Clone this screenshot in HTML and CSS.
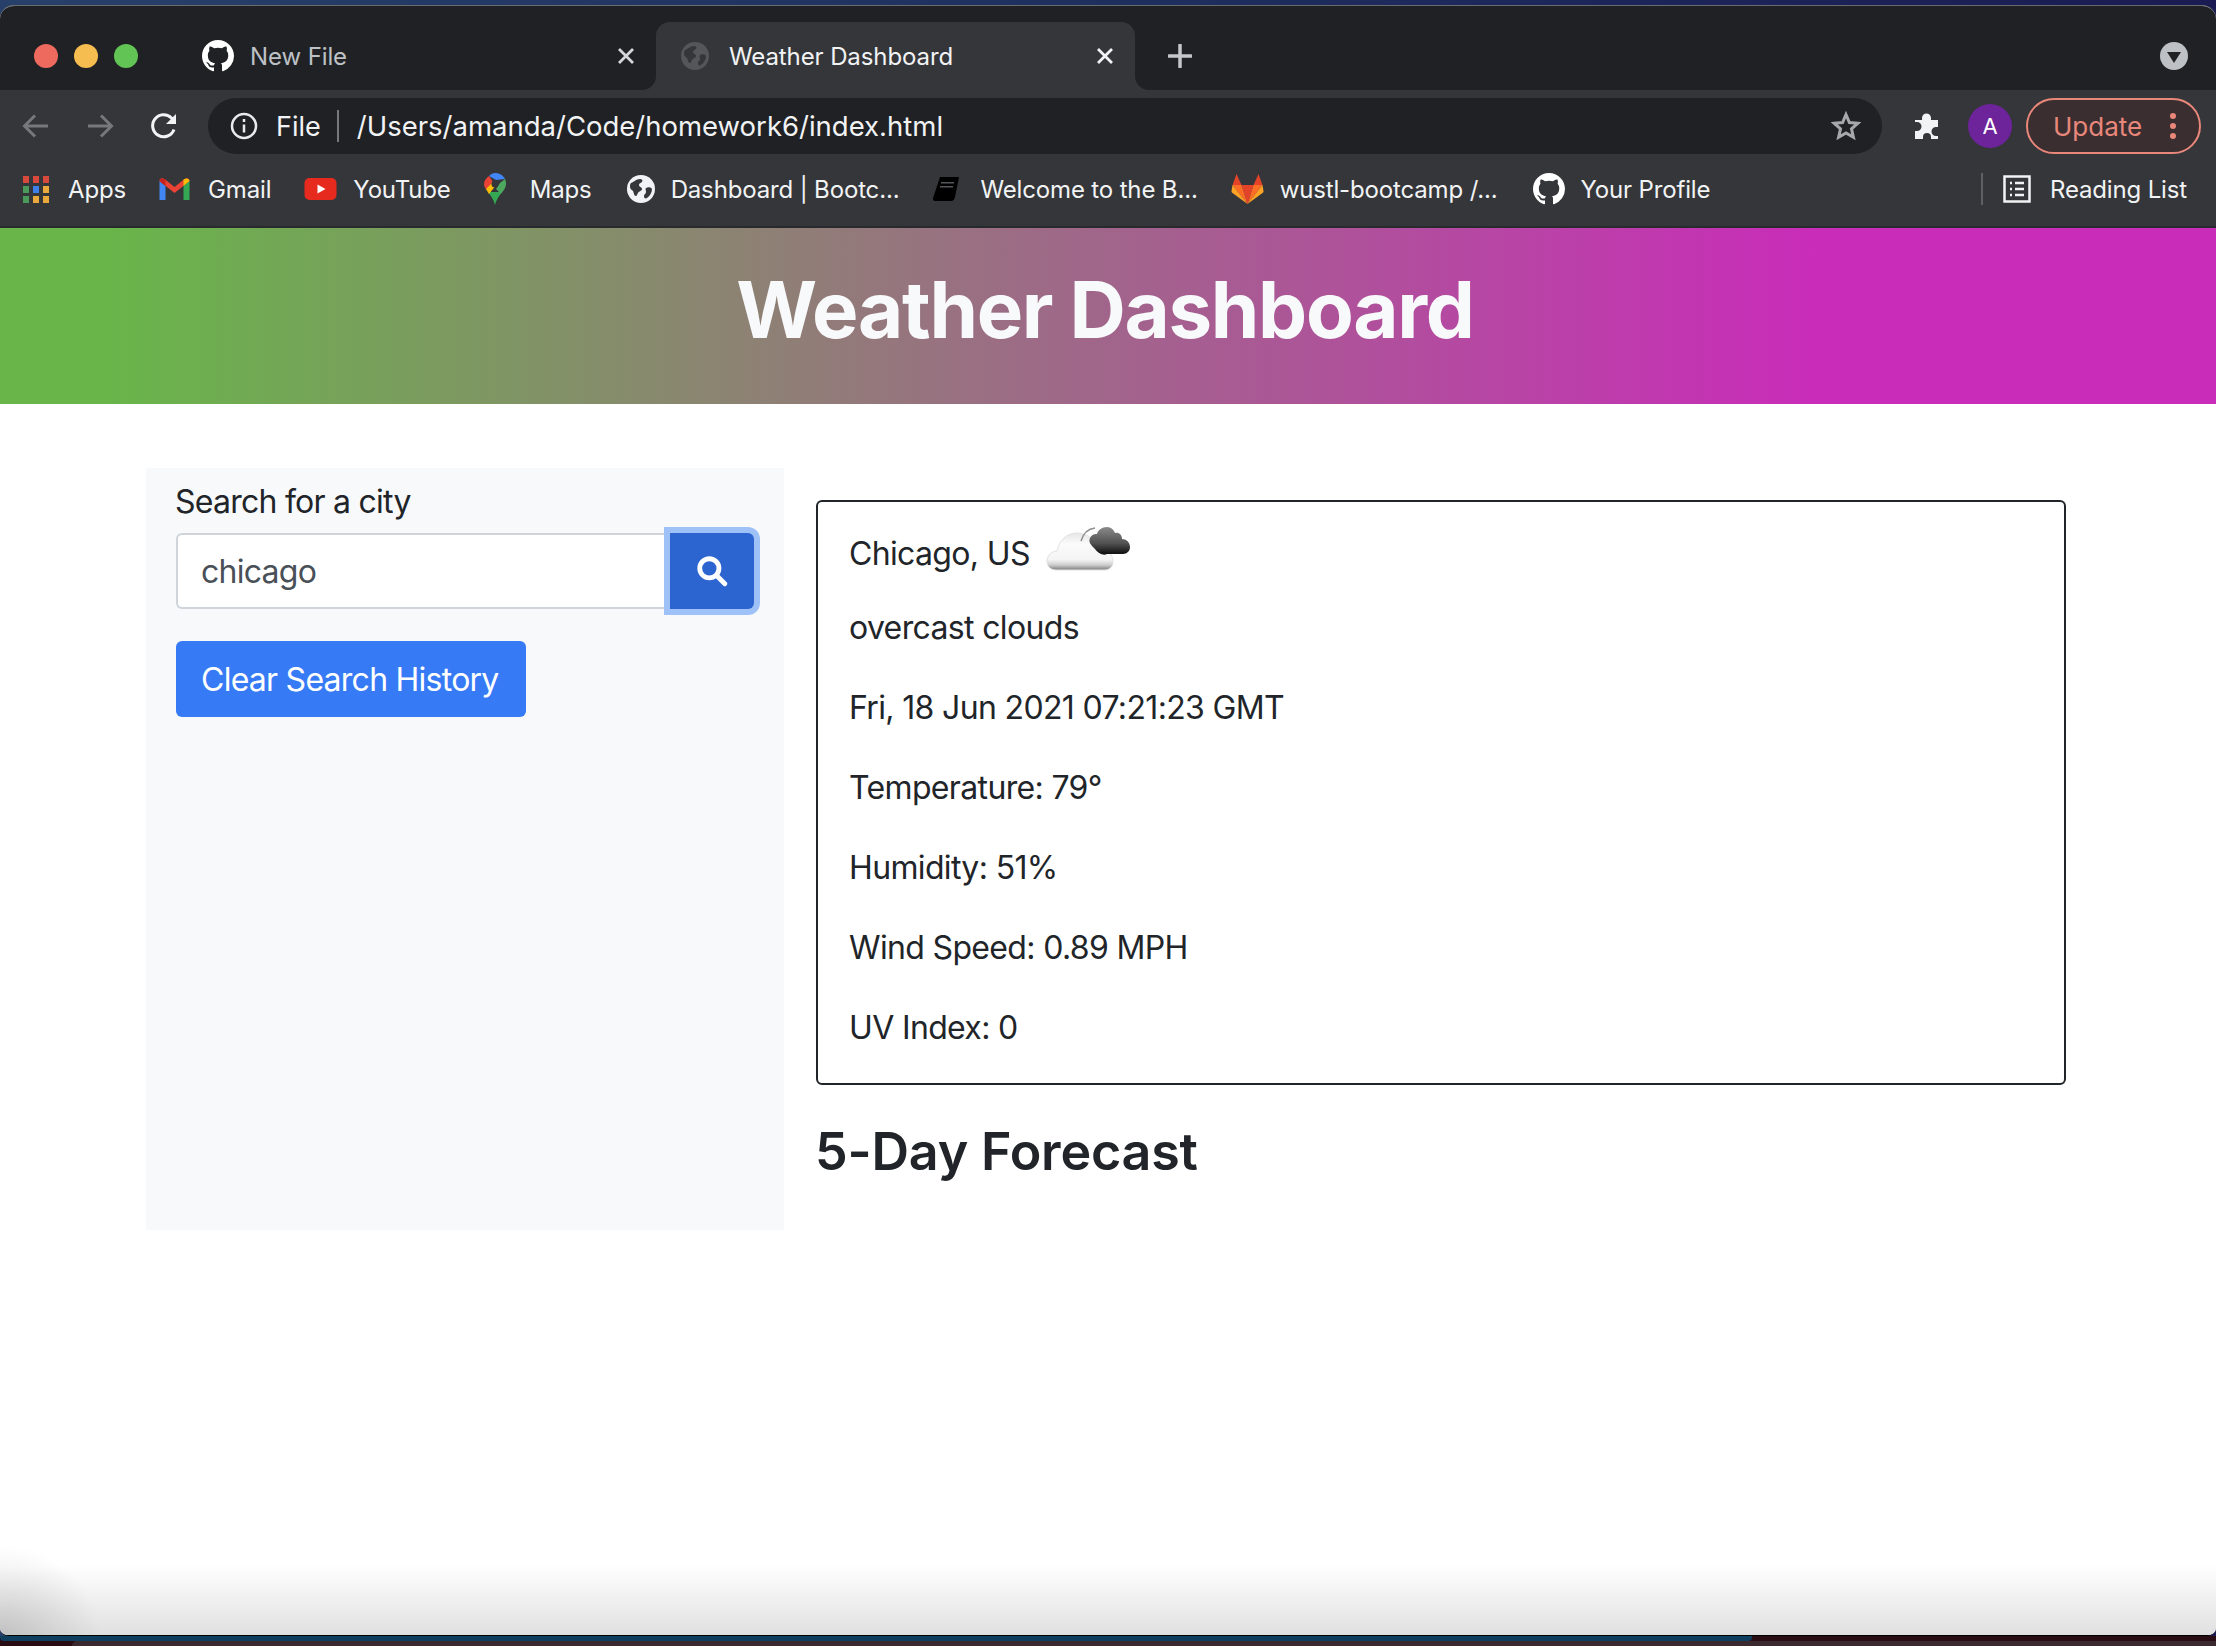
FILE: index.html
```html
<!DOCTYPE html>
<html>
<head>
    <title>Weather Dashboard</title>
    <link rel="stylesheet" href="styles.css">
</head>

<body>
    <svg class="defs" width="0" height="0">
        <symbol id="github" viewBox="0 0 16 16">
            <path fill="currentColor" d="M8 0C3.58 0 0 3.58 0 8c0 3.54 2.29 6.53 5.47 7.59.4.07.55-.17.55-.38 0-.19-.01-.82-.01-1.49-2.01.37-2.53-.49-2.69-.94-.09-.23-.48-.94-.82-1.13-.28-.15-.68-.52-.01-.53.63-.01 1.08.58 1.23.82.72 1.21 1.87.87 2.33.66.07-.52.28-.87.51-1.07-1.78-.2-3.64-.89-3.64-3.95 0-.87.31-1.59.82-2.15-.08-.2-.36-1.02.08-2.12 0 0 .67-.21 2.2.82.64-.18 1.32-.27 2-.27.68 0 1.36.09 2 .27 1.53-1.04 2.2-.82 2.2-.82.44 1.1.16 1.92.08 2.12.51.56.82 1.27.82 2.15 0 3.07-1.87 3.75-3.65 3.95.29.25.54.73.54 1.48 0 1.07-.01 1.93-.01 2.2 0 .21.15.46.55.38A8.013 8.013 0 0016 8c0-4.42-3.58-8-8-8z"/>
        </symbol>
        <symbol id="globe" viewBox="0 0 28 28">
            <circle cx="14" cy="14" r="14" fill="currentColor"/>
            <path fill="#35363a" d="M4 8c3-1 5-4 9-4 2 0 3 1 2 3-1 1-3 1-3 3s3 2 3 4-3 2-4 4c-1 1-1 3-2 3-2 0-2-3-3-5-1-1-3-2-3-4 0-2 0-3 1-4zM19 13c2-1 5-1 6 1 0 3-2 7-5 9-2 1-3 0-3-2s2-2 2-4-1-3 0-4z"/>
        </symbol>
        <symbol id="close" viewBox="0 0 18 18">
            <path fill="none" stroke="currentColor" stroke-width="2.800" d="M2 2l14 14M16 2 2 16"/>
        </symbol>
    </svg>

    <div class="window">
        <div class="tabstrip">
            <div class="lights">
                <span class="light red"></span>
                <span class="light yellow"></span>
                <span class="light green"></span>
            </div>
            <div class="tab">
                <svg class="favicon"><use href="#github"/></svg>
                <span class="tab-title">New File</span>
                <svg class="tab-close"><use href="#close"/></svg>
            </div>
            <div class="tab active">
                <svg class="favicon dim"><use href="#globe"/></svg>
                <span class="tab-title">Weather Dashboard</span>
                <svg class="tab-close"><use href="#close"/></svg>
            </div>
            <svg class="new-tab" viewBox="0 0 24 24"><path d="M12 1v22M1 12h22"/></svg>
            <span class="tab-menu"><i></i></span>
        </div>

        <div class="toolbar">
            <span class="nav-btn">
                <svg viewBox="0 0 28 28" class="nav-icon off"><path d="M26 14H3M13 3.500 2.500 14 13 24.500"/></svg>
            </span>
            <span class="nav-btn">
                <svg viewBox="0 0 28 28" class="nav-icon off"><path d="M2 14h23M15 3.500 25.500 14 15 24.500"/></svg>
            </span>
            <span class="nav-btn">
                <svg viewBox="0 0 28 28" class="nav-icon"><path d="M24 17.500A11 11 0 1 1 21.500 6L25 9.500"/><path class="solid" d="M26 2v10H16z"/></svg>
            </span>
            <div class="omnibox">
                <svg class="info" viewBox="0 0 28 28">
                    <circle cx="14" cy="14" r="12"/>
                    <path d="M14 12.500v8M14 7v3"/>
                </svg>
                <span class="scheme">File</span>
                <span class="omni-sep"></span>
                <span class="url">/Users/amanda/Code/homework6/index.html</span>
                <svg class="star" viewBox="0 0 30 30"><path d="M15 3.500 18.400 11.500 27 12.200 20.500 17.900 22.400 26.300 15 21.900 7.600 26.300 9.500 17.900 3 12.200 11.600 11.500z"/></svg>
            </div>
            <span class="nav-btn ext">
                <svg viewBox="0 0 30 30" class="puzzle"><path d="M3 9h7V7a4.500 4.500 0 0 1 9 0v2h7v7h-2a4.500 4.500 0 0 0 0 9h2v3H19v-2a4 4 0 0 0-8 0v2H3v-8h2a4.500 4.500 0 0 0 0-9H3z"/></svg>
            </span>
            <span class="avatar">A</span>
            <div class="update">
                <span>Update</span>
                <span class="dots"><i></i><i></i><i></i></span>
            </div>
        </div>

        <div class="bookmarks">
            <a class="bookmark">
                <svg class="bm-icon apps" viewBox="0 0 26 27">
                    <rect width="6" height="7" fill="#d8493d"/><rect x="10" width="6" height="7" fill="#d8493d"/><rect x="20" width="6" height="7" fill="#d8493d"/>
                    <rect y="10" width="6" height="7" fill="#4c9a5a"/><rect x="10" y="10" width="6" height="7" fill="#3f80e8"/><rect x="20" y="10" width="6" height="7" fill="#eaa93a"/>
                    <rect y="20" width="6" height="7" fill="#4c9a5a"/><rect x="10" y="20" width="6" height="7" fill="#eaa93a"/><rect x="20" y="20" width="6" height="7" fill="#eaa93a"/>
                </svg>
                Apps
            </a>
            <a class="bookmark">
                <svg class="bm-icon gmail" viewBox="0 0 30 22">
                    <path fill="#4285f4" d="M0 3v19h6V8z"/>
                    <path fill="#34a853" d="M24 8v14h6V3z"/>
                    <path fill="#ea4335" d="M0 2c1-2 3-2 5-1l10 8 10-8c2-1 4-1 5 1v1L15 15 0 3z"/>
                    <path fill="#c5221f" d="M0 3l6 5V1.500C3 0 1 0 0 3z"/>
                    <path fill="#fbbc04" d="M24 1.500V8l6-5c-1-3-3-3-6-1.500z"/>
                </svg>
                Gmail
            </a>
            <a class="bookmark">
                <svg class="bm-icon youtube" viewBox="0 0 32 22">
                    <rect width="32" height="22" rx="5" fill="#e62b1e"/>
                    <path fill="#fff" d="M13 6.500 21 11l-8 4.500z"/>
                </svg>
                YouTube
            </a>
            <a class="bookmark">
                <svg class="bm-icon maps" viewBox="0 0 22 32">
                    <path fill="#34a853" d="M4 19c3 4 6 8 7 13 1-5 4-9 7-13z"/>
                    <path fill="#fbbc04" d="M2 16c1 2 2 3 3 5l8-10-7-3C4 10 1 12 2 16z"/>
                    <path fill="#4285f4" d="M11 0c-2 0-4 1-6 3l7 4 9-1c-2-4-6-6-10-6z"/>
                    <path fill="#ea4335" d="M5 3C2 5 0 8 0 11c0 2 1 4 2 5l7-7z"/>
                    <path fill="#4ca75f" d="M21 6c1 2 1 4 1 5 0 4-3 7-5 10l-5-5 4-6z"/>
                    <circle cx="11" cy="11" r="3.500" fill="#35363a"/>
                </svg>
                Maps
            </a>
            <a class="bookmark">
                <svg class="bm-icon globe"><use href="#globe"/></svg>
                Dashboard | Bootc...
            </a>
            <a class="bookmark">
                <svg class="bm-icon book" viewBox="0 0 26 24">
                    <path fill="#000" d="M7 0h19l-4 20c-1 3-2 4-4 4H2c-2 0-2-2-2-3z"/>
                    <path fill="#55565a" d="M8 5h13v1.500H8zM7 9h13v1.500H7z"/>
                </svg>
                Welcome to the B...
            </a>
            <a class="bookmark">
                <svg class="bm-icon gitlab" viewBox="0 0 32 30">
                    <path fill="#e24329" d="M16 30 10 11h12z"/>
                    <path fill="#fc6d26" d="M16 30 1 11h9zM16 30l15-19h-9z"/>
                    <path fill="#fca326" d="M1 11 0 17c0 1 0 1 1 2l15 11zM31 11l1 6c0 1 0 1-1 2L16 30z"/>
                    <path fill="#e24329" d="M1 11 5 0l5 11zM31 11 27 0l-5 11z"/>
                </svg>
                wustl-bootcamp /...
            </a>
            <a class="bookmark">
                <svg class="bm-icon gh"><use href="#github"/></svg>
                Your Profile
            </a>
            <span class="bm-sep"></span>
            <a class="bookmark reading">
                <svg class="bm-icon list" viewBox="0 0 28 28">
                    <rect x="1.500" y="1.500" width="25" height="25"/>
                    <path d="M7 8h2M12 8h9M7 14h2M12 14h9M7 20h2M12 20h9"/>
                </svg>
                Reading List
            </a>
        </div>

        <div class="page">
            <header class="hero">
                <h1>Weather Dashboard</h1>
            </header>

            <main class="content">
                <aside class="sidebar">
                    <label class="search-label" for="city">Search for a city</label>
                    <div class="input-group">
                        <input id="city" type="text" value="chicago">
                        <button class="search-btn">
                            <svg viewBox="0 0 30 30"><circle cx="12.500" cy="12.500" r="9"/><path d="M19.500 19.500 27 27"/></svg>
                        </button>
                    </div>
                    <button class="clear-btn">Clear Search History</button>
                </aside>

                <section class="main-col">
                    <div class="current">
                        <div class="city-row">
                            <span>Chicago, US</span>
                            <svg class="weather-icon" viewBox="0 0 90 50">
                                <defs>
                                    <linearGradient id="whiteCloud" x1="0" y1="0" x2="0" y2="1">
                                        <stop offset="0" stop-color="#e6e6e6"/>
                                        <stop offset="0.3" stop-color="#fbfbfb"/>
                                        <stop offset="0.72" stop-color="#f4f4f4"/>
                                        <stop offset="0.86" stop-color="#cfcfcf"/>
                                        <stop offset="1" stop-color="#7d7d7d"/>
                                    </linearGradient>
                                    <linearGradient id="darkCloud" x1="0" y1="0" x2="0" y2="1">
                                        <stop offset="0" stop-color="#8a8a8a"/>
                                        <stop offset="0.6" stop-color="#505050"/>
                                        <stop offset="1" stop-color="#0c0c0c"/>
                                    </linearGradient>
                                    <filter id="soft"><feGaussianBlur stdDeviation="0.7"/></filter>
                                </defs>
                                <g filter="url(#soft)">
                                    <path fill="url(#whiteCloud)" stroke="#e2e2e2" d="M11 45C5 45 2 41 2 36 2 30 7 26 12 26 14 15 22 8 32 8 40 8 47 12 50 19 56 17 62 22 63 27 67 29 68 33 68 37 68 42 64 45 60 45z"/>
                                    <path fill="none" stroke="#8f8f8f" stroke-width="1.500" d="M36 16C38 9 42 4 50 3"/>
                                    <path fill="url(#darkCloud)" d="M50 24C46 20 43 17 45 13 47 9 50 9 52 9 53 5 57 2 62 2 66 2 69 5 70 8 74 7 77 10 77 14 82 14 85 18 85 22 85 26 82 29 78 29H62C58 31 53 28 50 24z"/>
                                </g>
                            </svg>
                        </div>
                        <p>overcast clouds</p>
                        <p>Fri, 18 Jun 2021 07:21:23 GMT</p>
                        <p>Temperature: 79°</p>
                        <p>Humidity: 51%</p>
                        <p>Wind Speed: 0.89 MPH</p>
                        <p>UV Index: 0</p>
                    </div>
                    <h2>5-Day Forecast</h2>
                </section>
            </main>
        </div>
    </div>

    <div class="dock-edge">
        <div class="wallpaper-strip"></div>
        <div class="back-window"></div>
    </div>
</body>
</html>
```

FILE: styles.css
```css
* {
    box-sizing: border-box;
}

html, body {
    height: 100%;
}

body {
    margin: 0;
    display: flex;
    flex-direction: column;
    height: 1646px;
    overflow: hidden;
    font-family: "Inter", "Liberation Sans", sans-serif;
    color: #212529;
    background: linear-gradient(to right, #27406a, #1e2f5e 50%, #1a1b52);
}

.defs {
    position: absolute;
}

/* browser window */
.window {
    margin-top: 5px;
    flex: 1;
    display: flex;
    flex-direction: column;
    min-height: 0;
    background: #fff;
    border-radius: 14px 14px 8px 8px;
    border-top: 1px solid #6a6b6e;
    border-bottom: 1px solid #000;
    overflow: hidden;
}

/* tabs */
.tabstrip {
    height: 84px;
    flex-shrink: 0;
    display: flex;
    align-items: flex-end;
    background: #202124;
    position: relative;
}

.lights {
    width: 190px;
    height: 68px;
    padding-left: 34px;
    display: flex;
    align-items: center;
    gap: 16px;
}

.light {
    width: 24px;
    height: 24px;
    border-radius: 50%;
}

.light.red { background: #ee6a5f; }
.light.yellow { background: #f5bd4f; }
.light.green { background: #61c454; }

.tab {
    height: 68px;
    width: 466px;
    padding: 0 21px 0 12px;
    display: flex;
    align-items: center;
    color: #bdc1c6;
    font-size: 24px;
    letter-spacing: -0.1px;
    position: relative;
}

.tab.active {
    width: 479px;
    padding-left: 25px;
    color: #f1f3f4;
    background: #35363a;
    border-radius: 14px 14px 0 0;
}

.tab.active::before,
.tab.active::after {
    content: "";
    position: absolute;
    bottom: 0;
    width: 14px;
    height: 14px;
}

.tab.active::before {
    left: -14px;
    background: radial-gradient(circle at 0 0, #202124 13.500px, #35363a 14.500px);
}

.tab.active::after {
    right: -14px;
    background: radial-gradient(circle at 100% 0, #202124 13.500px, #35363a 14.500px);
}

.favicon {
    width: 32px;
    height: 32px;
    color: #fff;
    flex-shrink: 0;
}

.favicon.dim {
    width: 28px;
    height: 28px;
    color: #55565a;
}

.tab-title {
    margin-left: 16px;
    flex: 1;
    white-space: nowrap;
}

.active .tab-title {
    margin-left: 20px;
}

.tab-close {
    width: 18px;
    height: 18px;
    color: #d5d7da;
    flex-shrink: 0;
}

.active .tab-close {
    color: #f1f3f4;
}

.new-tab {
    width: 24px;
    height: 24px;
    margin: 0 0 22px 33px;
    fill: none;
    stroke: #c4c7cb;
    stroke-width: 3.500;
    stroke-linecap: round;
}

.tab-menu {
    margin: 0 28px 20px auto;
    width: 28px;
    height: 28px;
    border-radius: 50%;
    background: #bdc1c6;
    display: flex;
    align-items: center;
    justify-content: center;
}

.tab-menu i {
    width: 0;
    height: 0;
    margin-top: 3px;
    border-left: 7px solid transparent;
    border-right: 7px solid transparent;
    border-top: 11px solid #202124;
}

/* toolbar */
.toolbar {
    height: 64px;
    flex-shrink: 0;
    padding: 8px 15px 0 4px;
    display: flex;
    align-items: center;
    background: #35363a;
}

.nav-btn {
    width: 64px;
    height: 56px;
    flex-shrink: 0;
    display: flex;
    align-items: center;
    justify-content: center;
}

.nav-icon {
    width: 28px;
    height: 28px;
    fill: none;
    stroke: #f1f3f4;
    stroke-width: 3;
}

.nav-icon.off {
    stroke: #77787b;
}

.nav-icon .solid {
    fill: #f1f3f4;
    stroke: none;
}

.omnibox {
    flex: 1;
    height: 56px;
    margin-left: 12px;
    margin-right: 13px;
    padding: 0 21px 0 22px;
    display: flex;
    align-items: center;
    background: #202124;
    border-radius: 28px;
    color: #f1f3f4;
    font-size: 27px;
    white-space: nowrap;
}

.info {
    width: 28px;
    height: 28px;
    fill: none;
    stroke: #e8eaed;
    stroke-width: 2.500;
    flex-shrink: 0;
}

.scheme {
    margin-left: 18px;
}

.omni-sep {
    width: 2px;
    height: 32px;
    margin: 0 18px 0 16px;
    background: #77787b;
}

.url {
    flex: 1;
    font-size: 27.500px;
}

.star {
    width: 30px;
    height: 30px;
    fill: none;
    stroke: #a6a8ab;
    stroke-width: 3;
}

.puzzle {
    width: 30px;
    height: 30px;
    fill: #f1f3f4;
}

.avatar {
    width: 44px;
    height: 44px;
    margin: 0 14px 0 9px;
    flex-shrink: 0;
    border-radius: 50%;
    background: #6d239a;
    color: #fff;
    font-size: 22px;
    display: flex;
    align-items: center;
    justify-content: center;
}

.update {
    width: 175px;
    height: 56px;
    flex-shrink: 0;
    padding: 0 23px 0 25px;
    display: flex;
    align-items: center;
    justify-content: space-between;
    border: 2px solid #e8877a;
    border-radius: 28px;
    background: #3b2e30;
    color: #e8877a;
    font-size: 26px;
}

.dots {
    display: flex;
    flex-direction: column;
    gap: 4px;
}

.dots i {
    width: 6px;
    height: 6px;
    border-radius: 50%;
    background: #e8877a;
}

/* bookmarks */
.bookmarks {
    height: 74px;
    flex-shrink: 0;
    padding: 0 29px 2px 23px;
    display: flex;
    align-items: center;
    gap: 33px;
    background: #35363a;
    border-bottom: 2px solid #292a2d;
    color: #f1f3f4;
    font-size: 24px;
    letter-spacing: -0.15px;
    white-space: nowrap;
}

.bookmark {
    display: flex;
    align-items: center;
    gap: 19px;
}

.bm-icon {
    flex-shrink: 0;
}

.apps { width: 26px; height: 27px; }
.gmail { width: 31px; height: 22px; margin-right: -1px; }
.youtube { width: 33px; height: 22px; margin-right: -3px; }
.maps { width: 22px; height: 32px; margin-right: 5px; }
.globe { width: 28px; height: 28px; color: #f1f3f4; margin: 0 -3px 0 2px; }
.book { width: 26px; height: 24px; margin: 0 2px 0 1px; }
.gitlab { width: 33px; height: 30px; margin-right: -3px; }
.gh { width: 32px; height: 32px; color: #fff; margin: 0 -4px 0 3px; }

.list {
    width: 28px;
    height: 28px;
    fill: none;
    stroke: #f1f3f4;
    stroke-width: 2.500;
}

.bm-sep {
    width: 2px;
    height: 32px;
    margin-left: auto;
    background: #5f6065;
}

.bookmarks .reading {
    margin-left: -13px;
}

/* page */
.page {
    flex: 1;
    min-height: 0;
    background:
        radial-gradient(ellipse 100px 90px at 0 100%, rgba(0, 0, 0, 0.14), rgba(0, 0, 0, 0)),
        linear-gradient(to bottom, rgba(0, 0, 0, 0), rgba(0, 0, 0, 0.12)) left bottom / 100% 70px no-repeat,
        #fff;
}

.hero {
    height: 176px;
    padding: 31px 6px 0 0;
    text-align: center;
    color: #f8f9fa;
    background: linear-gradient(to right, #69b54a 5%, #c92cb9 82%);
}

.hero h1 {
    margin: 0;
    font-size: 78px;
    font-weight: 700;
    letter-spacing: -1.300px;
    line-height: 1.3;
}

.content {
    padding: 64px 150px 0 146px;
    display: flex;
    gap: 32px;
}

.sidebar {
    width: 638px;
    height: 762px;
    flex-shrink: 0;
    padding: 16px 30px 0;
    background: #f8f9fa;
    letter-spacing: -0.75px;
}

.search-label {
    display: block;
    margin: 0 0 12px -1px;
    font-size: 32px;
    line-height: 1.15;
}

.input-group {
    display: flex;
    width: 578px;
    height: 76px;
}

.input-group input {
    flex: 1;
    min-width: 0;
    padding: 2px 24px 0 23px;
    font-family: inherit;
    font-size: 32px;
    letter-spacing: -0.75px;
    color: #495057;
    background: #fff;
    border: 2px solid #ced4da;
    border-right: none;
    border-radius: 6px 0 0 6px;
}

.search-btn {
    width: 84px;
    height: 76px;
    display: flex;
    align-items: center;
    justify-content: center;
    padding: 0;
    border: none;
    border-radius: 0 6px 6px 0;
    background: #2c65d0;
    box-shadow: 0 0 0 6px #9ec2f8;
}

.search-btn svg {
    width: 32px;
    height: 32px;
    fill: none;
    stroke: #fff;
    stroke-width: 4.500;
    stroke-linecap: round;
}

.clear-btn {
    display: block;
    height: 76px;
    margin-top: 32px;
    padding: 1px 27px 0 25px;
    border: none;
    border-radius: 6px;
    background: #377af5;
    color: #fff;
    font-family: inherit;
    font-size: 32px;
    letter-spacing: -0.75px;
}

.main-col {
    flex: 1;
    padding-top: 32px;
}

.current {
    height: 585px;
    padding: 16px 31px 0;
    border: 2px solid #212529;
    border-radius: 6px;
    font-size: 32px;
    letter-spacing: -0.65px;
}

.current p {
    margin: 0;
    height: 80px;
    line-height: 80px;
}

.city-row {
    height: 70px;
    display: flex;
    align-items: center;
}

.weather-icon {
    width: 90px;
    height: 50px;
    margin: -6px 0 0 15px;
}

.main-col h2 {
    margin: 36px 0 0 -1px;
    font-size: 52px;
    font-weight: 600;
    letter-spacing: -0.2px;
    line-height: 1.2;
}

/* what shows of the desktop under the window */
.dock-edge {
    height: 10px;
    flex-shrink: 0;
    display: flex;
    flex-direction: column;
    background: #2a0c14;
}

.wallpaper-strip {
    width: 1752px;
    height: 5px;
    background: #0f3f5f;
    border-radius: 0 0 4px 4px;
}

.back-window {
    flex: 1;
    margin-left: 72px;
    background: #3a2a30;
    border-radius: 6px 0 0 0;
}
```
